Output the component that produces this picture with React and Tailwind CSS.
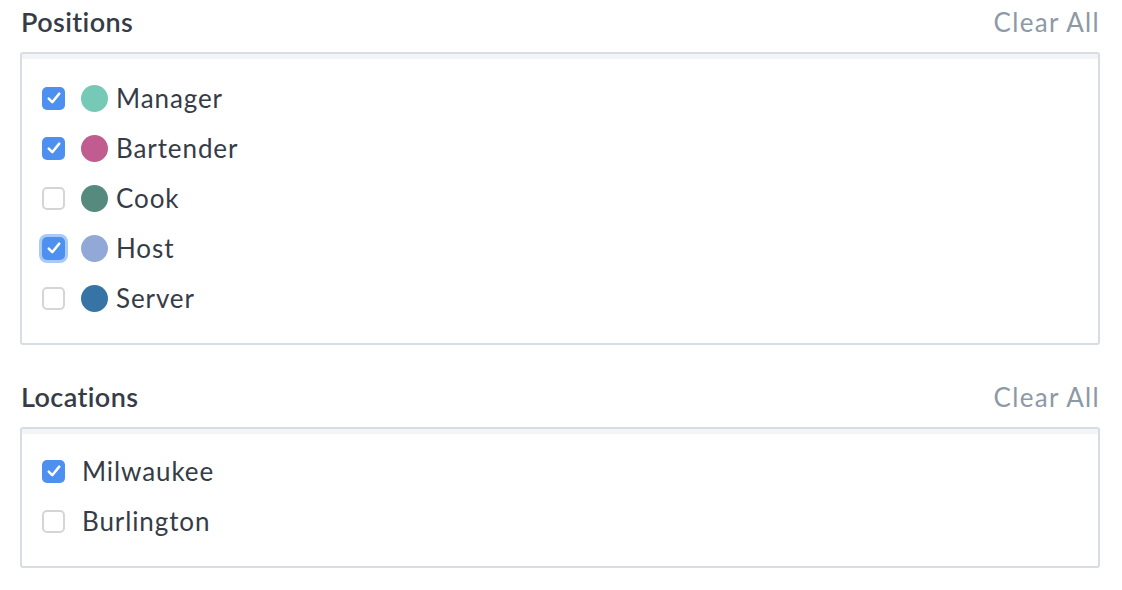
const positions = [
  { name: 'Manager', color: 'bg-[#76c9b7]', checked: true },
  { name: 'Bartender', color: 'bg-[#c05c8f]', checked: true },
  { name: 'Cook', color: 'bg-[#578a7f]', checked: false },
  { name: 'Host', color: 'bg-[#92a8d7]', checked: true, focus: true },
  { name: 'Server', color: 'bg-[#3574a5]', checked: false },
];

const locations = [
  { name: 'Milwaukee', checked: true },
  { name: 'Burlington', checked: false },
];

function Check({ checked, focus }) {
  if (!checked) {
    return <span className="w-[23px] h-[23px] rounded-[5px] border-2 border-[#d3d5d8] bg-white shrink-0" />;
  }
  return (
    <span
      className={
        'w-[23px] h-[23px] rounded-[5px] bg-[#4e90f0] flex items-center justify-center shrink-0 ' +
        (focus ? 'ring-[3px] ring-[#a9c9f7]' : '')
      }
    >
      <svg width="16" height="16" viewBox="0 0 14 14" fill="none">
        <path d="M2.4 7.6 L5.5 10.7 L11.6 3.2" stroke="white" strokeWidth="2.2" strokeLinecap="round" strokeLinejoin="round" />
      </svg>
    </span>
  );
}

function Section({ title, pad, children }) {
  return (
    <div>
      <div className="flex items-center justify-between h-[44px] pl-[1px]">
        <h2 className="text-[27px] font-semibold tracking-[0.4px] text-[#363c47]">{title}</h2>
        <button className="text-[26px] tracking-[1.3px] text-[#8e99a6]">Clear All</button>
      </div>
      <div className={'mt-[8px] border-2 border-[#d8dce5] rounded-[3px] shadow-[inset_0_5px_0_#f2f4f7] pl-[20px] ' + pad}>
        {children}
      </div>
    </div>
  );
}

export default function App() {
  return (
    <div className="w-[1122px] h-[590px] bg-white pl-[20px] pr-[22px] font-['Lato',sans-serif] text-[#363c47]">
      <Section title="Positions" pad="pt-[19px] pb-[20px]">
        <div className="flex flex-col">
          {positions.map((p) => (
            <label key={p.name} className="flex items-center h-[50px]">
              <Check checked={p.checked} focus={p.focus} />
              <span className={'ml-[16px] w-[27px] h-[27px] rounded-full ' + p.color} />
              <span className="ml-[8px] text-[26px] tracking-[0.9px]">{p.name}</span>
            </label>
          ))}
        </div>
      </Section>
      <div className="h-[30px]" />
      <Section title="Locations" pad="pt-[17px] pb-[20px]">
        <div className="flex flex-col">
          {locations.map((l) => (
            <label key={l.name} className="flex items-center h-[50px]">
              <Check checked={l.checked} />
              <span className="ml-[17px] text-[26px] tracking-[0.9px]">{l.name}</span>
            </label>
          ))}
        </div>
      </Section>
    </div>
  );
}
